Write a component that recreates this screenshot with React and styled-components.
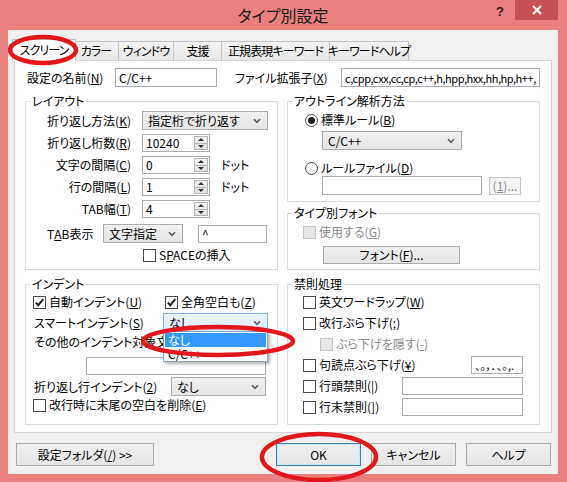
import React from "react";
import styled, { createGlobalStyle } from "styled-components";

const GlobalStyle = createGlobalStyle`
  html, body { margin: 0; padding: 0; background: #E8817F; }
  body {
    font-family: "Noto Sans CJK JP", "Noto Sans", sans-serif;
    font-size: 12px;
    line-height: 16px;
    color: #000;
    font-feature-settings: "palt" 1;
  }
  * { box-sizing: border-box; }
`;

const Window = styled.div`
  position: relative;
  width: 567px;
  height: 482px;
  background: #E8817F;
  padding: 0 9px 8px 8px;
  display: flex;
  flex-direction: column;
  overflow: hidden;
`;

const TitleBar = styled.div`
  height: 30px;
  flex: none;
  display: grid;
  grid-template-columns: 1fr auto 1fr;
`;

const Title = styled.div`
  grid-column: 2;
  font-size: 16px;
  line-height: 30px;
  color: #1b1b1b;
`;

const Caption = styled.div`
  grid-column: 3;
  justify-self: end;
  display: flex;
  align-items: flex-start;
  gap: 11px;
`;

const HelpGlyph = styled.span`
  font-family: "Liberation Sans", sans-serif;
  font-weight: bold;
  font-size: 13px;
  line-height: 13px;
  margin-top: 5px;
  color: #3a2020;
`;

const CloseButton = styled.div`
  width: 43px;
  height: 20px;
  background: #C75050;
  display: flex;
  align-items: center;
  justify-content: center;
`;

const Client = styled.div`
  flex: 1;
  background: #F0F0F0;
  padding: 9px 6px 0 6px;
  display: flex;
  flex-direction: column;
`;

const TabStrip = styled.div`
  display: flex;
  align-items: flex-end;
  height: 21px;
  flex: none;
`;

const Tab = styled.div`
  position: relative;
  width: ${(p) => (p.$active ? p.$w + 4 : p.$w + 1)}px;
  height: ${(p) => (p.$active ? 22 : 19)}px;
  margin: ${(p) => (p.$active ? "0 -2px -1px -2px" : "0 0 0 -1px")};
  z-index: ${(p) => (p.$active ? 1 : 0)};
  border: 1px solid #C3C3C3;
  border-bottom: ${(p) => (p.$active ? "1px solid #fff" : "none")};
  background: ${(p) => (p.$active ? "#fff" : "linear-gradient(#F2F2F2, #E8E8E8)")};
  display: flex;
  align-items: center;
  justify-content: center;
  white-space: nowrap;
  letter-spacing: -0.9px;
  padding-bottom: ${(p) => (p.$active ? 1 : 0)}px;
  &:first-child { margin-left: -2px; }
`;

const Panel = styled.div`
  height: 373px;
  flex: none;
  border: 1px solid #D5D5D5;
  background: #fff;
  padding: 7px 11px 0 10px;
`;

const TopRow = styled.div`
  display: grid;
  grid-template-columns: 90px 102px 124px 199px;
  align-items: center;
  height: 19px;
`;

const Text = styled.span`
  white-space: nowrap;
  padding-left: ${(p) => p.$pl || 0}px;
  color: ${(p) => (p.$disabled ? "#8A8A8A" : "#000")};
`;

const Acc = styled.u`
  text-decoration: underline;
  text-underline-offset: 1px;
`;

const TextBox = styled.div`
  width: ${(p) => p.$w}px;
  height: ${(p) => p.$h || 19}px;
  flex: none;
  margin-left: ${(p) => p.$ml || 0}px;
  border: 1px solid #ABADB3;
  background: #fff;
  padding: 0 3px;
  display: flex;
  align-items: center;
  overflow: hidden;
  white-space: nowrap;
  font-size: ${(p) => p.$fs || 12}px;
  letter-spacing: ${(p) => p.$ls || 0}px;
`;

const MainGrid = styled.div`
  margin-top: 6px;
  display: grid;
  grid-template-columns: 253px 253px;
  grid-template-rows: 177px 149px;
  column-gap: 9px;
  row-gap: 6px;
`;

const Stack = styled.div`
  display: flex;
  flex-direction: column;
  gap: 3px;
`;

const Group = styled.fieldset`
  margin: 0;
  padding: 0;
  min-width: 0;
  width: 100%;
  height: ${(p) => p.$h}px;
  border: 1px solid #DCDCDC;
  align-self: start;
`;

const Legend = styled.legend`
  padding: 0 2px;
  margin-left: 4px;
  line-height: 16px;
  height: 16px;
  white-space: nowrap;
`;

const GroupBody = styled.div`
  display: flex;
  flex-direction: column;
  padding-top: ${(p) => p.$pt || 0}px;
  gap: ${(p) => p.$gap || 0}px;
`;

const FieldRow = styled.div`
  display: grid;
  grid-template-columns: 105px auto auto;
  justify-content: start;
  column-gap: 11px;
  align-items: center;
`;

const FieldLabel = styled.span`
  text-align: right;
  white-space: nowrap;
`;

const Line = styled.div`
  display: flex;
  align-items: center;
  height: ${(p) => p.$h || 14}px;
  margin-top: ${(p) => p.$mt || 0}px;
  padding-left: ${(p) => p.$pl || 0}px;
  padding-right: ${(p) => p.$pr || 0}px;
`;

const Slot = styled.div`
  display: flex;
  align-items: center;
  width: ${(p) => (p.$w ? `${p.$w}px` : "auto")};
  flex: none;
  white-space: nowrap;
`;

const Push = styled.div`
  margin-left: auto;
`;

const ComboShell = styled.div`
  position: relative;
  width: ${(p) => p.$w}px;
  height: ${(p) => p.$h || 19}px;
  flex: none;
  margin-left: ${(p) => p.$ml || 0}px;
  display: flex;
  align-items: center;
  justify-content: space-between;
  padding: 0 6px 0 5px;
  border: 1px solid ${(p) => (p.$open ? "#7EB4EA" : "#ACACAC")};
  background: ${(p) =>
    p.$open ? "linear-gradient(#ECF4FC, #DCECFC)" : "linear-gradient(#F0F0F0, #E5E5E5)"};
  white-space: nowrap;
`;

const DropList = styled.div`
  position: absolute;
  left: -1px;
  top: 100%;
  width: calc(100% + 2px);
  border: 1px solid #8AA6C6;
  background: #fff;
  box-shadow: 2px 2px 3px rgba(0, 0, 0, 0.3);
  padding: 1px 1px 0;
  z-index: 5;
`;

const DropItem = styled.div`
  height: 14px;
  line-height: 14px;
  padding-left: 3px;
  background: ${(p) => (p.$sel ? "#3399FF" : "#fff")};
  color: ${(p) => (p.$sel ? "#fff" : "#000")};
`;

const Chevron = () => (
  <svg width="8" height="6" viewBox="0 0 8 6">
    <path d="M1 1.2 L4 4.3 L7 1.2" fill="none" stroke="#5E5E5E" strokeWidth="1.6" />
  </svg>
);

const Combo = ({ w, h, ml, open, children, items }) => (
  <ComboShell $w={w} $h={h} $ml={ml} $open={open}>
    <span>{children}</span>
    <Chevron />
    {items && (
      <DropList>
        {items.map((it, i) => (
          <DropItem key={it} $sel={i === 0}>
            {it}
          </DropItem>
        ))}
      </DropList>
    )}
  </ComboShell>
);

const SpinShell = styled.div`
  width: 68px;
  height: 18px;
  border: 1px solid #ABADB3;
  background: #fff;
  display: flex;
  align-items: center;
  padding-left: 3px;
`;

const SpinValue = styled.span`
  flex: 1;
  font-size: 12px;
`;

const SpinButtons = styled.div`
  width: 14px;
  height: 14px;
  margin-right: 1px;
  display: flex;
  flex-direction: column;
  border: 1px solid #B5B5B5;
  background: linear-gradient(#F2F2F2, #E2E2E2);
`;

const SpinHalf = styled.div`
  flex: 1;
  display: flex;
  align-items: center;
  justify-content: center;
  & + & { border-top: 1px solid #B5B5B5; }
`;

const Tri = styled.span`
  width: 0;
  height: 0;
  border-left: 3px solid transparent;
  border-right: 3px solid transparent;
  ${(p) => (p.$up ? "border-bottom: 3px solid #333;" : "border-top: 3px solid #333;")}
`;

const Spin = ({ value }) => (
  <SpinShell>
    <SpinValue>{value}</SpinValue>
    <SpinButtons>
      <SpinHalf>
        <Tri $up />
      </SpinHalf>
      <SpinHalf>
        <Tri />
      </SpinHalf>
    </SpinButtons>
  </SpinShell>
);

const CheckBox = styled.span`
  width: 13px;
  height: 13px;
  flex: none;
  margin-right: 3px;
  border: 1px solid ${(p) => (p.$disabled ? "#C4C4C4" : "#4A4A4A")};
  background: ${(p) => (p.$disabled ? "#E6E6E6" : "#fff")};
  display: inline-flex;
  align-items: center;
  justify-content: center;
`;

const Check = ({ checked, disabled, children }) => (
  <Slot>
    <CheckBox $disabled={disabled}>
      {checked && (
        <svg width="11" height="11" viewBox="0 0 11 11">
          <path d="M1.8 5.6 L4.3 8.2 L9.3 2.2" fill="none" stroke="#1E1E1E" strokeWidth="2" />
        </svg>
      )}
    </CheckBox>
    <Text $disabled={disabled}>{children}</Text>
  </Slot>
);

const RadioCircle = styled.span`
  width: 13px;
  height: 13px;
  flex: none;
  margin-right: 3px;
  border-radius: 50%;
  border: 1px solid #4A4A4A;
  background: #fff;
  display: inline-flex;
  align-items: center;
  justify-content: center;
`;

const RadioDot = styled.span`
  width: 7px;
  height: 7px;
  border-radius: 50%;
  background: #1E1E1E;
`;

const Radio = ({ checked, children }) => (
  <Slot>
    <RadioCircle>{checked && <RadioDot />}</RadioCircle>
    <Text>{children}</Text>
  </Slot>
);

const Button = styled.div`
  width: ${(p) => p.$w}px;
  height: ${(p) => p.$h || 23}px;
  flex: none;
  margin-left: ${(p) => p.$ml || 0}px;
  border: 1px solid ${(p) => (p.$default ? "#3C7FB1" : p.$disabled ? "#C8C8C8" : "#ACACAC")};
  background: ${(p) =>
    p.$disabled ? "#F4F4F4" : "linear-gradient(#F0F0F0, #E5E5E5)"};
  color: ${(p) => (p.$disabled ? "#8A8A8A" : "#000")};
  display: flex;
  align-items: center;
  justify-content: center;
  white-space: nowrap;
  box-shadow: ${(p) => (p.$default ? "inset 0 0 0 1px #CDE6F7" : "none")};
`;

const ButtonRow = styled.div`
  display: flex;
  align-items: center;
  height: 23px;
  margin-top: 10px;
  padding: 0 1px 0 2px;
`;

const RightButtons = styled.div`
  margin-left: auto;
  display: flex;
  gap: 10px;
`;

const Annotations = styled.svg`
  position: absolute;
  left: 0;
  top: 0;
  width: 567px;
  height: 482px;
  pointer-events: none;
  z-index: 10;
`;

const tabs = [
  ["スクリーン", 60],
  ["カラー", 45],
  ["ウィンドウ", 55],
  ["支援", 48],
  ["正規表現キーワード", 108],
  ["キーワードヘルプ", 79],
];

export default function App() {
  return (
    <>
      <GlobalStyle />
      <Window>
        <TitleBar>
          <Title>タイプ別設定</Title>
          <Caption>
            <HelpGlyph>?</HelpGlyph>
            <CloseButton>
              <svg width="10" height="10" viewBox="0 0 10 10">
                <path d="M1 1 L9 9 M9 1 L1 9" stroke="#fff" strokeWidth="2" />
              </svg>
            </CloseButton>
          </Caption>
        </TitleBar>
        <Client>
          <TabStrip>
            {tabs.map(([t, w], i) => (
              <Tab key={t} $w={w} $active={i === 0}>
                {t}
              </Tab>
            ))}
          </TabStrip>
          <Panel>
            <TopRow>
              <Text $pl={2}>
                設定の名前(<Acc>N</Acc>)
              </Text>
              <TextBox $w={102}>C/C++</TextBox>
              <Text $pl={18}>
                ファイル拡張子(<Acc>X</Acc>)
              </Text>
              <TextBox $w={199} $fs={11} $ls={-0.45}>
                c,cpp,cxx,cc,cp,c++,h,hpp,hxx,hh,hp,h++,
              </TextBox>
            </TopRow>
            <MainGrid>
              <Group $h={177}>
                <Legend>レイアウト</Legend>
                <GroupBody $pt={2} $gap={4}>
                  <FieldRow>
                    <FieldLabel>
                      折り返し方法(<Acc>K</Acc>)
                    </FieldLabel>
                    <Combo w={126}>指定桁で折り返す</Combo>
                  </FieldRow>
                  <FieldRow>
                    <FieldLabel>
                      折り返し桁数(<Acc>R</Acc>)
                    </FieldLabel>
                    <Spin value="10240" />
                  </FieldRow>
                  <FieldRow>
                    <FieldLabel>
                      文字の間隔(<Acc>C</Acc>)
                    </FieldLabel>
                    <Spin value="0" />
                    <Text>ドット</Text>
                  </FieldRow>
                  <FieldRow>
                    <FieldLabel>
                      行の間隔(<Acc>L</Acc>)
                    </FieldLabel>
                    <Spin value="1" />
                    <Text>ドット</Text>
                  </FieldRow>
                  <FieldRow>
                    <FieldLabel>
                      TAB幅(<Acc>T</Acc>)
                    </FieldLabel>
                    <Spin value="4" />
                  </FieldRow>
                  <Line $h={19} $mt={2} $pl={21}>
                    <Slot $w={56}>
                      T<Acc>A</Acc>B表示
                    </Slot>
                    <Combo w={80}>文字指定</Combo>
                    <TextBox $w={69} $ml={15} $h={18}>
                      ^
                    </TextBox>
                  </Line>
                  <Line $h={16} $pl={117}>
                    <Check>
                      S<Acc>P</Acc>ACEの挿入
                    </Check>
                  </Line>
                </GroupBody>
              </Group>
              <Stack>
                <Group $h={109}>
                  <Legend>アウトライン解析方法</Legend>
                  <GroupBody $pt={4}>
                    <Line $pl={17}>
                      <Radio checked>
                        標準ルール(<Acc>B</Acc>)
                      </Radio>
                    </Line>
                    <Line $h={19} $mt={4} $pl={34}>
                      <Combo w={140}>C/C++</Combo>
                    </Line>
                    <Line $mt={11} $pl={17}>
                      <Radio>
                        ルールファイル(<Acc>D</Acc>)
                      </Radio>
                    </Line>
                    <Line $h={19} $mt={1} $pl={34}>
                      <TextBox $w={160} />
                      <Button $w={32} $h={18} $ml={7} $disabled>
                        (<Acc>1</Acc>)...
                      </Button>
                    </Line>
                  </GroupBody>
                </Group>
                <Group $h={65}>
                  <Legend>タイプ別フォント</Legend>
                  <GroupBody $pt={4}>
                    <Line $pl={15}>
                      <Check disabled>
                        使用する(<Acc>G</Acc>)
                      </Check>
                    </Line>
                    <Line $h={18} $mt={7} $pl={35}>
                      <Button $w={137} $h={18}>
                        フォント(<Acc>F</Acc>)...
                      </Button>
                    </Line>
                  </GroupBody>
                </Group>
              </Stack>
              <Group $h={149}>
                <Legend>インデント</Legend>
                <GroupBody $pt={3}>
                  <Line $pl={7}>
                    <Slot $w={132}>
                      <Check checked>
                        自動インデント(<Acc>U</Acc>)
                      </Check>
                    </Slot>
                    <Check checked>
                      全角空白も(<Acc>Z</Acc>)
                    </Check>
                  </Line>
                  <Line $h={19} $mt={4} $pl={8}>
                    <Slot $w={129}>
                      スマートインデント(<Acc>S</Acc>)
                    </Slot>
                    <Combo w={105} open items={["なし", "C/C++"]}>
                      なし
                    </Combo>
                  </Line>
                  <Line $mt={3} $pl={8}>
                    <Text>その他のインデント対象文字</Text>
                  </Line>
                  <Line $h={18} $mt={8}>
                    <TextBox $w={180} $h={18} $ml={60} />
                  </Line>
                  <Line $h={19} $mt={2} $pl={8}>
                    <Slot $w={137}>
                      折り返し行インデント(<Acc>2</Acc>)
                    </Slot>
                    <Combo w={95}>なし</Combo>
                  </Line>
                  <Line $mt={2} $pl={7}>
                    <Check>
                      改行時に末尾の空白を削除(<Acc>E</Acc>)
                    </Check>
                  </Line>
                </GroupBody>
              </Group>
              <Group $h={149}>
                <Legend>禁則処理</Legend>
                <GroupBody $gap={1}>
                  <Line $h={20} $pl={15}>
                    <Check>
                      英文ワードラップ(<Acc>W</Acc>)
                    </Check>
                  </Line>
                  <Line $h={20} $pl={15}>
                    <Check>
                      改行ぶら下げ(<Acc>;</Acc>)
                    </Check>
                  </Line>
                  <Line $h={20} $pl={32}>
                    <Check disabled>
                      ぶら下げを隠す(<Acc>-</Acc>)
                    </Check>
                  </Line>
                  <Line $h={20} $pl={15} $pr={16}>
                    <Check>
                      句読点ぶら下げ(<Acc>¥</Acc>)
                    </Check>
                    <Push />
                    <TextBox $w={52} $h={18} $fs={11}>
                      、。，．､｡,.
                    </TextBox>
                  </Line>
                  <Line $h={20} $pl={15} $pr={16}>
                    <Check>
                      行頭禁則(<Acc>|</Acc>)
                    </Check>
                    <Push />
                    <TextBox $w={121} $h={18} />
                  </Line>
                  <Line $h={20} $pl={15} $pr={16}>
                    <Check>
                      行末禁則(<Acc>]</Acc>)
                    </Check>
                    <Push />
                    <TextBox $w={121} $h={18} />
                  </Line>
                </GroupBody>
              </Group>
            </MainGrid>
          </Panel>
          <ButtonRow>
            <Button $w={138}>
              設定フォルダ(<Acc>/</Acc>) &gt;&gt;
            </Button>
            <RightButtons>
              <Button $w={85} $default>
                OK
              </Button>
              <Button $w={85}>キャンセル</Button>
              <Button $w={85}>ヘルプ</Button>
            </RightButtons>
          </ButtonRow>
        </Client>
        <Annotations viewBox="0 0 567 482">
          <ellipse cx="43" cy="50" rx="33" ry="13" fill="none" stroke="#E3161D" strokeWidth="4.5" />
          <ellipse cx="218" cy="341" rx="75" ry="14" fill="none" stroke="#E3161D" strokeWidth="4.5" />
          <ellipse cx="319" cy="457" rx="57" ry="23" fill="none" stroke="#E3161D" strokeWidth="4.5" />
        </Annotations>
      </Window>
    </>
  );
}
